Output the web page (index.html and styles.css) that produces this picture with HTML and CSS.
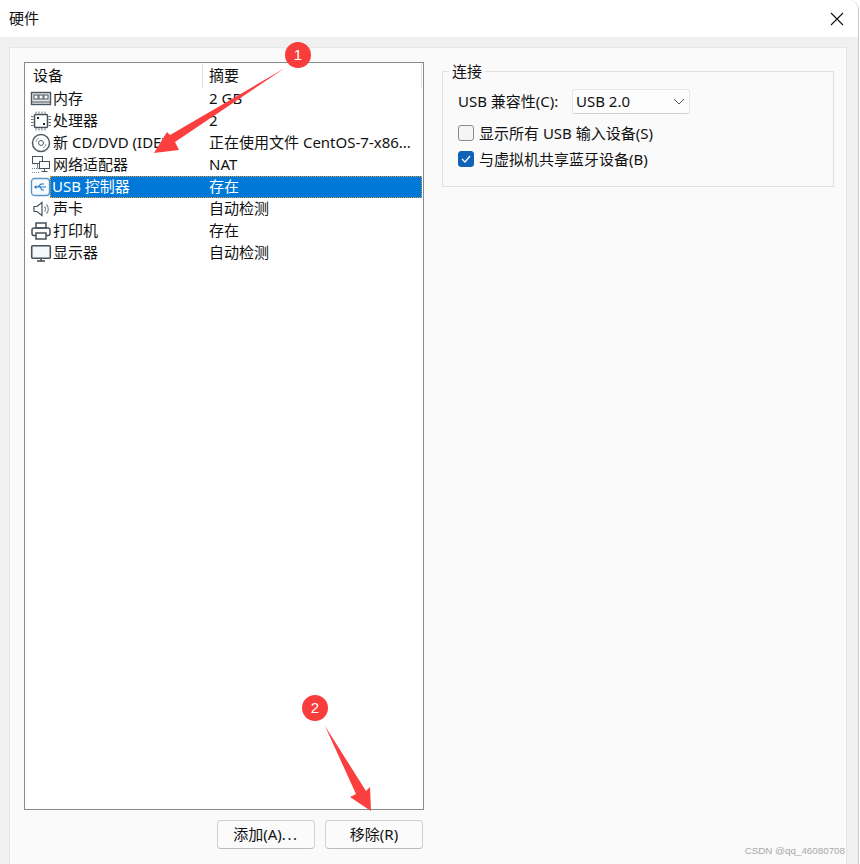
FILE: index.html
```html
<!DOCTYPE html>
<html lang="zh">
<head>
<meta charset="utf-8">
<title>硬件</title>
<link rel="stylesheet" href="styles.css">
</head>
<body>
<div class="window">
  <header class="titlebar">
    <span class="title">硬件</span>
    <svg class="close" width="14" height="14" viewBox="0 0 14 14"><path d="M1 1l12 12M13 1L1 13" stroke="#111" stroke-width="1.1" fill="none"/></svg>
  </header>
  <div class="body">
    <div class="panel">
      <section class="left">
        <div class="list">
          <div class="list-head">
            <div class="col-a">设备</div>
            <div class="col-b">摘要</div>
          </div>
          <div class="row">
            <svg class="ico" width="22" height="16" viewBox="0 0 22 16" fill="none" stroke="#4a565f" stroke-width="1.400"><rect x="1.500" y="1.500" width="19" height="12" fill="#e2e6e9"/><rect x="4" y="4" width="4" height="4" fill="#fff" stroke-width="1"/><rect x="9" y="4" width="4" height="4" fill="#fff" stroke-width="1"/><rect x="14" y="4" width="4" height="4" fill="#fff" stroke-width="1"/><path d="M2 11h18" stroke-width="1"/></svg>
            <span class="name">内存</span><span class="sum">2 GB</span>
          </div>
          <div class="row">
            <svg class="ico" width="22" height="20" viewBox="0 0 22 20" fill="none" stroke="#46515a"><rect x="4.500" y="3.500" width="13" height="13" rx="1" stroke-width="1.500"/><path d="M6 0.500v2M9 0.500v2M12 0.500v2M15 0.500v2M6 17.500v2M9 17.500v2M12 17.500v2M15 17.500v2M1 5.500h2.500M1 8.500h2.500M1 11.500h2.500M1 14.500h2.500M18.500 5.500h2.500M18.500 8.500h2.500M18.500 11.500h2.500M18.500 14.500h2.500" stroke="#66717a"/><rect x="7" y="6" width="2" height="2" fill="#222" stroke="none"/><rect x="13" y="12" width="2" height="2" fill="#222" stroke="none"/></svg>
            <span class="name">处理器</span><span class="sum">2</span>
          </div>
          <div class="row">
            <svg class="ico" width="22" height="20" viewBox="0 0 22 20" fill="none" stroke="#505c65"><circle cx="11" cy="10" r="8.500" stroke-width="1.500"/><circle cx="11" cy="10" r="2.500"/><path d="M6 9a5 5 0 0 1 3-4M16 11a5 5 0 0 1-3 4" stroke="#8f98a0"/></svg>
            <span class="name">新 CD/DVD (IDE)</span><span class="sum">正在使用文件 CentOS-7-x86...</span>
          </div>
          <div class="row">
            <svg class="ico" width="22" height="20" viewBox="0 0 22 20" fill="none" stroke="#46515a"><rect x="2.500" y="1.500" width="10" height="7" fill="#fff"/><path d="M2 13.500h8M2 17.500h8" stroke="#7f8890" stroke-dasharray="1 1"/><path d="M7.500 8.500v5" stroke="#7f8890"/><rect x="9.500" y="6.500" width="10" height="7" fill="#fff"/><path d="M14.500 13.500v3M11.500 16.500h6"/></svg>
            <span class="name">网络适配器</span><span class="sum">NAT</span>
          </div>
          <div class="row selected">
            <svg class="ico" width="22" height="20" viewBox="0 0 22 20" fill="none"><rect x="1.500" y="1.500" width="18" height="17" rx="3" stroke="#5c93c4" stroke-width="1.300" fill="#f7fbff"/><path d="M5 10h11M8 10l3-3h3M10 10l2 3h2" stroke="#1f78c1" stroke-width="1.100"/><path d="M4 10l2.500-2v4z" fill="#1f78c1"/></svg>
            <span class="name">USB 控制器</span><span class="sum">存在</span>
          </div>
          <div class="row">
            <svg class="ico" width="22" height="20" viewBox="0 0 22 20" fill="none" stroke="#46515a" stroke-width="1.200"><path d="M4 7.500h3l5-4v13l-5-4H4z" fill="#fff"/><path d="M14.500 7.500a3.500 3.500 0 0 1 0 5M16.500 5.500a6.500 6.500 0 0 1 0 9" stroke="#7f8890"/></svg>
            <span class="name">声卡</span><span class="sum">自动检测</span>
          </div>
          <div class="row">
            <svg class="ico" width="22" height="20" viewBox="0 0 22 20" fill="none" stroke="#46515a" stroke-width="1.500"><rect x="6" y="2" width="10" height="5"/><rect x="2" y="7" width="18" height="7.500" rx="2"/><rect x="6" y="12" width="10" height="6" fill="#fff"/></svg>
            <span class="name">打印机</span><span class="sum">存在</span>
          </div>
          <div class="row">
            <svg class="ico" width="22" height="20" viewBox="0 0 22 20" fill="none" stroke="#46515a" stroke-width="1.600"><rect x="1.700" y="2.700" width="18.600" height="12.600" rx="1" fill="#f4f6f7"/><path d="M7 18h8" stroke-width="1.600"/><path d="M11 15.500V18"/></svg>
            <span class="name">显示器</span><span class="sum">自动检测</span>
          </div>
        </div>
        <div class="actions">
          <button class="btn" type="button"><span class="btn-label">添加(A)<span class="dots">...</span></span></button>
          <button class="btn" type="button"><span class="btn-label">移除(R)</span></button>
        </div>
      </section>
      <fieldset class="group">
        <legend class="legend">连接</legend>
        <div class="compat">
          <span class="compat-label">USB 兼容性(C):</span>
          <div class="select">
            <span class="select-value">USB 2.0</span>
            <svg width="12" height="7" viewBox="0 0 12 7"><path d="M1 1l5 5 5-5" stroke="#555" fill="none"/></svg>
          </div>
        </div>
        <div class="check-row">
          <span class="box"></span><span class="check-label">显示所有 USB 输入设备(S)</span>
        </div>
        <div class="check-row">
          <span class="box checked"><svg width="10" height="8" viewBox="0 0 10 8"><path d="M1 4l3 3 5-6" stroke="#fff" stroke-width="1.200" fill="none"/></svg></span><span class="check-label">与虚拟机共享蓝牙设备(B)</span>
        </div>
      </fieldset>
    </div>
  </div>
</div>
<div class="watermark">CSDN @qq_46080708</div>
<svg class="annot" width="860" height="864" viewBox="0 0 860 864">
  <path d="M285 68L170 135L167 132L154 153L179 150L175 142Z" fill="#fb3f3f"/>
  <circle cx="298" cy="55" r="13" fill="#f93d3d"/>
  <text x="298" y="60" class="annot-num">1</text>
  <path d="M325 726L366 791L370 787L371 811L350 797L356 794Z" fill="#fb3f3f"/>
  <circle cx="315" cy="708" r="13" fill="#f93d3d"/>
  <text x="315" y="713" class="annot-num">2</text>
</svg>
</body>
</html>
```
FILE: styles.css
```css
* { box-sizing: border-box; }
html, body { margin: 0; padding: 0; }
body {
  width: 860px;
  height: 864px;
  overflow: hidden;
  background: #fff;
  font-family: "Noto Sans", "Noto Sans CJK SC", sans-serif;
  font-size: 15px;
  color: #111;
  position: relative;
}
.window {
  width: 859px;
  height: 864px;
  display: flex;
  flex-direction: column;
  border-right: 1px solid #c9c9c9;
  border-top-right-radius: 10px;
  overflow: hidden;
  background: #fff;
}
.titlebar {
  height: 37px;
  flex: none;
  display: flex;
  align-items: center;
  justify-content: space-between;
  padding: 0 14px 0 9px;
  background: #fff;
}
.title { line-height: 20px; padding-bottom: 2px; }
.body {
  flex: 1;
  background: #f0f0f0;
  padding: 10px 11px 0 9px;
  display: flex;
}
.panel {
  flex: 1;
  background: #fafafa;
  border: 1px solid #e6e6e6;
  border-bottom: 0;
  display: flex;
  align-items: flex-start;
  padding: 14px 12px 0 14px;
  gap: 18px;
}
.left { width: 400px; flex: none; }
.list {
  height: 748px;
  border: 1px solid #868a91;
  background: #fff;
}
.list-head {
  height: 25px;
  display: flex;
  line-height: 25px;
}
.col-a { width: 178px; padding-left: 8px; border-right: 1px solid #e2e2e2; }
.col-b { width: 219px; padding-left: 6px; border-right: 1px solid #e2e2e2; }
.row {
  height: 22px;
  display: flex;
  align-items: center;
  line-height: 20px;
  padding-left: 5px;
  white-space: nowrap;
}
.ico { flex: none; width: 22px; margin-right: 1px; }
.name { width: 156px; flex: none; padding-bottom: 2px; }
.sum { padding-bottom: 2px; }
.selected { position: relative; color: #fff; }
.selected .name, .selected .sum, .selected .ico { position: relative; z-index: 1; }
.selected .name { margin-left: -1px; width: 157px; }
.selected::before {
  content: "";
  position: absolute;
  left: 25px;
  right: 1px;
  top: 0;
  bottom: 0;
  background: #0078d7;
  outline: 1px dotted #d99a3c;
  outline-offset: -1px;
}
.actions {
  display: flex;
  justify-content: flex-end;
  gap: 10px;
  margin-top: 10px;
  padding-right: 1px;
}
.btn {
  width: 98px;
  height: 29px;
  padding: 0 0 2px;
  font: inherit;
  color: #111;
  background: #fbfbfb;
  border: 1px solid #d0d0d0;
  border-bottom-color: #bcbcbc;
  border-radius: 4px;
}
.dots { letter-spacing: 1.600px; }
.group {
  flex: 1;
  margin: 0;
  min-width: 0;
  height: 125px;
  padding: 10px 15px 0;
  border: 1px solid #dfdfdf;
}
.legend { margin-left: -9px; padding: 0 3px; line-height: 18px; height: 18px; }
.compat { display: flex; align-items: center; height: 25px; margin-top: -1px; }
.compat-label { width: 114px; flex: none; padding-bottom: 2px; }
.select {
  width: 118px;
  height: 25px;
  background: #fdfdfd;
  border: 1px solid #e6e6e6;
  border-bottom-color: #cfcfcf;
  border-radius: 3px;
  display: flex;
  align-items: center;
  justify-content: space-between;
  padding: 0 4px 0 3px;
}
.select-value { padding-bottom: 2px; }
.check-row { display: flex; align-items: center; gap: 5px; height: 26px; }
.compat + .check-row { margin-top: 6px; }
.check-label { padding-bottom: 1px; }
.box {
  width: 16px;
  height: 16px;
  flex: none;
  border: 1px solid #8a8a8a;
  border-radius: 3px;
  background: #f5f5f5;
  display: flex;
  align-items: center;
  justify-content: center;
}
.box.checked { background: #0f62b8; border-color: #0f62b8; }
.watermark {
  position: absolute;
  right: 15px;
  bottom: 7px;
  font-family: "Liberation Sans", sans-serif;
  font-size: 9.800px;
  line-height: 12px;
  color: #a8a8a8;
}
.annot { position: absolute; left: 0; top: 0; pointer-events: none; }
.annot-num { font: 15px "Liberation Sans", sans-serif; fill: #fff; text-anchor: middle; }
```
